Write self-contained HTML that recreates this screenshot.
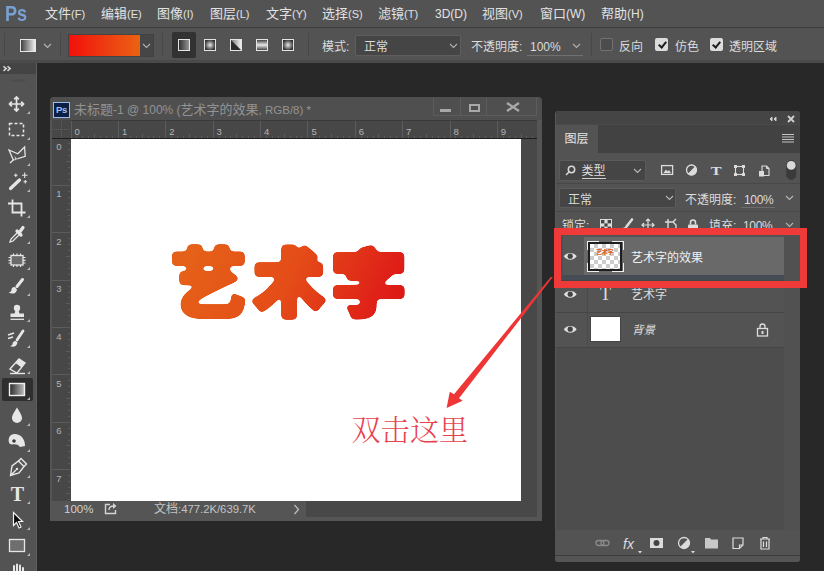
<!DOCTYPE html>
<html lang="zh-CN">
<head>
<meta charset="utf-8">
<title>Photoshop</title>
<style>
*{box-sizing:border-box;margin:0;padding:0}
html,body{width:824px;height:571px;overflow:hidden;background:#282828}
body{position:relative;font-family:"Liberation Sans","Noto Sans CJK SC",sans-serif;color:#dcdcdc;font-size:12px}
.abs{position:absolute}
.l{font-size:11px}
/* menu bar */
#menubar{left:0;top:0;width:824px;height:27px;background:#535353}
#menubar .mi{position:absolute;top:0;height:27px;line-height:27.5px;font-size:13px;color:#e2e2e2;white-space:nowrap}
#menubar .mi .l{font-size:11px;letter-spacing:0}
#pslogo{left:5px;top:0px;font-size:22px;font-weight:bold;color:#78a0d2;line-height:27px;transform:scaleX(0.82);transform-origin:0 50%}
/* options bar */
#optbar{left:0;top:27px;width:824px;height:33px;background:#535353;border-top:1px solid #3c3c3c}
.vsep{position:absolute;width:1px;background:#484848;top:33px;height:23px}
.txt{position:absolute;white-space:nowrap;color:#dcdcdc;font-size:12px;line-height:14px}
.chev{position:absolute}
.cb{width:13px;height:12.5px;background:#dcdcdc;border-radius:2px}
.cb:after{content:"";position:absolute;left:4.5px;top:1.5px;width:3px;height:6px;border:solid #1e1e1e;border-width:0 2px 2px 0;transform:rotate(40deg)}
/* toolbar */
#tools{left:0;top:63px;width:37px;height:508px;background:#535353}
#toolshead{left:0;top:63px;width:37px;height:11px;background:#444}
/* doc window */
#doc{left:50px;top:97px;width:492px;height:424px;background:#4a4a4a;border-radius:4px 4px 0 0}
#doctitle{left:50px;top:97px;width:492px;height:24px;background:#4f4f4f;border-radius:4px 4px 0 0}
#canvas{left:71px;top:139px;width:450px;height:362px;background:#fff}
/* layers panel */
#panel{left:555px;top:111px;width:245px;height:451px;background:#4d4d4d;border-radius:3px}
</style>
</head>
<body>
<!-- MENU BAR -->
<div id="menubar" class="abs">
  <div id="pslogo" class="abs">Ps</div>
  <div class="mi" style="left:45px">文件<span class="l">(F)</span></div>
  <div class="mi" style="left:101px">编辑<span class="l">(E)</span></div>
  <div class="mi" style="left:157px">图像<span class="l">(I)</span></div>
  <div class="mi" style="left:210px">图层<span class="l">(L)</span></div>
  <div class="mi" style="left:266px">文字<span class="l">(Y)</span></div>
  <div class="mi" style="left:322px">选择<span class="l">(S)</span></div>
  <div class="mi" style="left:378px">滤镜<span class="l">(T)</span></div>
  <div class="mi" style="left:435px"><span class="l" style="font-size:12px">3D(D)</span></div>
  <div class="mi" style="left:482px">视图<span class="l">(V)</span></div>
  <div class="mi" style="left:540px">窗口<span class="l" style="font-size:12px">(W)</span></div>
  <div class="mi" style="left:601px">帮助<span class="l" style="font-size:12px">(H)</span></div>
</div>
<!-- OPTIONS BAR -->
<div id="optbar" class="abs"></div>
<div class="vsep" style="left:4px"></div>
<!-- tool preset -->
<svg class="abs" style="left:19px;top:38px" width="18" height="15" viewBox="0 0 18 15">
  <defs><linearGradient id="gbw" x1="0" x2="1" y1="0" y2="0"><stop offset="0" stop-color="#3a3a3a"/><stop offset="1" stop-color="#f4f4f4"/></linearGradient>
  <linearGradient id="gwb" x1="0" x2="1" y1="0" y2="0"><stop offset="0" stop-color="#f4f4f4"/><stop offset="1" stop-color="#3a3a3a"/></linearGradient></defs>
  <rect x="1.5" y="1.5" width="15" height="12" fill="url(#gbw)" stroke="#e6e6e6" stroke-width="1"/>
</svg>
<svg class="abs" style="left:43px;top:43px" width="9" height="6" viewBox="0 0 9 6"><path d="M1 1 L4.5 4.5 L8 1" fill="none" stroke="#b4b4b4" stroke-width="1.2"/></svg>
<div class="vsep" style="left:60px"></div>
<!-- gradient swatch -->
<div class="abs" style="left:67.5px;top:34px;width:72px;height:22.5px;background:linear-gradient(90deg,#f2100c 0%,#ee3a10 50%,#ec6212 100%);border:1px solid #474340;border-right:none"></div>
<div class="abs" style="left:139.5px;top:34px;width:14.5px;height:22.5px;background:#464646;border:1px solid #424242;border-left:none"></div>
<svg class="abs" style="left:142px;top:43px" width="9" height="6" viewBox="0 0 9 6"><path d="M1 1 L4.5 4.5 L8 1" fill="none" stroke="#b0b0b0" stroke-width="1.1"/></svg>
<div class="vsep" style="left:162px"></div>
<!-- gradient type buttons -->
<div class="abs" style="left:172px;top:32px;width:24px;height:26px;background:#323232;border-radius:2px"></div>
<svg class="abs" style="left:171px;top:32px" width="130" height="26" viewBox="0 0 130 26">
  <defs>
   <linearGradient id="g1" x1="0" x2="1" y1="0" y2="0"><stop offset="0" stop-color="#2c2c2c"/><stop offset="1" stop-color="#9a9a9a"/></linearGradient>
   <radialGradient id="g2"><stop offset="0" stop-color="#e8e8e8"/><stop offset="1" stop-color="#333"/></radialGradient>
   <linearGradient id="g3" x1="0" x2="1" y1="0" y2="0"><stop offset="0" stop-color="#777"/><stop offset="1" stop-color="#f0f0f0"/></linearGradient>
   <linearGradient id="g4" x1="0" x2="0" y1="0" y2="1"><stop offset="0" stop-color="#333"/><stop offset="0.5" stop-color="#e8e8e8"/><stop offset="1" stop-color="#333"/></linearGradient>
  </defs>
  <rect x="7.5" y="7.5" width="11" height="11" fill="url(#g1)" stroke="#e4e4e4"/>
  <rect x="33.5" y="7.5" width="11" height="11" fill="url(#g2)" stroke="#e4e4e4"/>
  <rect x="59.5" y="7.5" width="11" height="11" fill="#2c2c2c" stroke="#e4e4e4"/>
  <path d="M60 8 L70 8 L70 18 Z" fill="url(#g3)"/>
  <rect x="85.5" y="7.5" width="11" height="11" fill="url(#g4)" stroke="#e4e4e4"/>
  <rect x="111.5" y="7.5" width="11" height="11" fill="url(#g2)" stroke="#e4e4e4"/>
</svg>
<div class="vsep" style="left:308px"></div>
<div class="txt" style="left:322px;top:40px">模式:</div>
<div class="abs" style="left:355px;top:35px;width:106px;height:21px;background:#454545;border:1px solid #5e5e5e;border-radius:2px"></div>
<div class="txt" style="left:364px;top:40px">正常</div>
<svg class="abs" style="left:449px;top:43px" width="9" height="6" viewBox="0 0 9 6"><path d="M1 1 L4.5 4.5 L8 1" fill="none" stroke="#b0b0b0" stroke-width="1.1"/></svg>
<div class="txt" style="left:471px;top:40px">不透明度:</div>
<div class="txt" style="left:530px;top:40px">100%</div>
<div class="abs" style="left:527px;top:55px;width:56px;height:1px;background:#707070"></div>
<svg class="abs" style="left:572px;top:43px" width="9" height="6" viewBox="0 0 9 6"><path d="M1 1 L4.5 4.5 L8 1" fill="none" stroke="#b0b0b0" stroke-width="1.1"/></svg>
<div class="vsep" style="left:591px"></div>
<div class="abs" style="left:600px;top:38px;width:13px;height:12.5px;background:#4c4c4c;border:1px solid #727272;border-radius:2px"></div>
<div class="txt" style="left:619px;top:40px">反向</div>
<div class="abs cb" style="left:655px;top:38px"></div>
<div class="txt" style="left:675px;top:40px">仿色</div>
<div class="abs cb" style="left:709.5px;top:38px"></div>
<div class="txt" style="left:729px;top:40px">透明区域</div>
<!-- TOOLBAR -->
<div id="tools" class="abs"></div>
<div id="toolshead" class="abs"></div>
<div class="abs" style="left:36px;top:63px;width:1px;height:508px;background:#5e5e5e"></div>
<div class="abs" style="left:0;top:60px;width:824px;height:2.5px;background:#4a4a4a"></div>
<div class="abs" style="left:2px;top:378px;width:31px;height:23px;background:#2f2f2f;border-radius:2px"></div>
<svg class="abs" style="left:0;top:0" width="37" height="571" viewBox="0 0 37 571" fill="none" stroke="#e6e6e6" stroke-width="1.4">
  <defs><linearGradient id="tg" x1="0" x2="1" y1="0" y2="0"><stop offset="0" stop-color="#2a2a2a"/><stop offset="1" stop-color="#bdbdbd"/></linearGradient></defs>
  <!-- header chevrons -->
  <path d="M3.5 66.3 l2.7 2.3 l-2.7 2.3 M7.5 66.3 l2.7 2.3 l-2.7 2.3" stroke="#d8d8d8" stroke-width="1.5"/>
  <path d="M11 80.5 h14" stroke="#4c4c4c" stroke-width="2"/>
  <path d="M30 137 l0 3 l-3 0 z" fill="#b8b8b8" stroke="none"/><path d="M30 163 l0 3 l-3 0 z" fill="#b8b8b8" stroke="none"/><path d="M30 189 l0 3 l-3 0 z" fill="#b8b8b8" stroke="none"/><path d="M30 215 l0 3 l-3 0 z" fill="#b8b8b8" stroke="none"/><path d="M30 241 l0 3 l-3 0 z" fill="#b8b8b8" stroke="none"/><path d="M30 267 l0 3 l-3 0 z" fill="#b8b8b8" stroke="none"/><path d="M30 293 l0 3 l-3 0 z" fill="#b8b8b8" stroke="none"/><path d="M30 319 l0 3 l-3 0 z" fill="#b8b8b8" stroke="none"/><path d="M30 345 l0 3 l-3 0 z" fill="#b8b8b8" stroke="none"/><path d="M30 371 l0 3 l-3 0 z" fill="#b8b8b8" stroke="none"/><path d="M30 397 l0 3 l-3 0 z" fill="#b8b8b8" stroke="none"/><path d="M30 423 l0 3 l-3 0 z" fill="#b8b8b8" stroke="none"/><path d="M30 449 l0 3 l-3 0 z" fill="#b8b8b8" stroke="none"/><path d="M30 475 l0 3 l-3 0 z" fill="#b8b8b8" stroke="none"/><path d="M30 501 l0 3 l-3 0 z" fill="#b8b8b8" stroke="none"/><path d="M30 527 l0 3 l-3 0 z" fill="#b8b8b8" stroke="none"/><path d="M30 553 l0 3 l-3 0 z" fill="#b8b8b8" stroke="none"/>
  <path d="M30 111 l0 3 l-3 0 z" fill="#b8b8b8" stroke="none"/>
  <!-- move -->
  <g transform="translate(16.5,104)" stroke-width="1.7"><path d="M0 -6.5 V6.5 M-6.5 0 H6.5"/><path d="M-2.3 -4.7 L0 -7 L2.3 -4.7 M-2.3 4.7 L0 7 L2.3 4.7 M-4.7 -2.3 L-7 0 L-4.7 2.3 M4.7 -2.3 L7 0 L4.7 2.3" /></g>
  <!-- marquee -->
  <rect x="9.5" y="123.5" width="14" height="12" stroke-dasharray="3 2" stroke-width="1.5"/>
  <!-- polygonal lasso -->
  <path d="M9 150 L17.8 153.8 L24.6 147 L25.2 156.3 L13.3 160 Z" stroke-width="1.3"/>
  <path d="M13.3 160 L10 163" stroke-width="1.3"/>
  <path d="M14.5 155.5 L15 161 L16.5 159.5 L18.5 160.5 Z" fill="#e6e6e6" stroke="#535353" stroke-width="0.6"/>
  <!-- magic wand -->
  <path d="M10.5 188.5 L19.5 180" stroke-width="3.2" stroke-linecap="round"/>
  <path d="M24.7 172.5 v5.5 M22 175.2 h5.5 M15.8 173.5 v3.5 M14 175.2 h3.5 M25.3 180 v3.5 M23.5 181.7 h3.5" stroke-width="1.1"/>
  <!-- crop -->
  <path d="M12.5 199.5 V212.5 H25.5 M8 203.5 H21.5 V216.5" stroke-width="1.8"/>
  <!-- eyedropper -->
  <path d="M10 242 L11 239 L18 232 L20 234 L13 241 Z" stroke-width="1.3"/>
  <path d="M17 231 L21 235 M19 233 L23 227.5" stroke-width="3.2" stroke-linecap="round"/>
  <!-- patch -->
  <rect x="11" y="255.5" width="12" height="9.5" fill="#6a6a6a" stroke-width="1.3"/>
  <path d="M13.5 253.5 v2 M17 253.5 v2 M20.5 253.5 v2 M13.5 265 v2 M17 265 v2 M20.5 265 v2 M8.5 257.5 h2.5 M8.5 260.3 h2.5 M8.5 263 h2.5 M23 257.5 h2.5 M23 260.3 h2.5 M23 263 h2.5" stroke-width="1.2"/>
  <!-- brush -->
  <path d="M22.5 279.5 L17 286.5" stroke-width="3" stroke-linecap="round"/>
  <path d="M15 287 c-2 -0.5 -3.5 1 -3.5 2.8 c0 1.5 -1.5 2.7 -3 2.7 c3 2 8 1.5 8.5 -3 z" fill="#e6e6e6" stroke="none"/>
  <!-- stamp -->
  <circle cx="17" cy="308" r="3.2" fill="#e6e6e6" stroke="none"/>
  <path d="M15.5 310 h3 l1 4 h-5 z" fill="#e6e6e6" stroke="none"/>
  <rect x="10.5" y="313.5" width="13.5" height="3.5" fill="#e6e6e6" stroke="none"/>
  <path d="M10.5 319.3 h13.5" stroke-width="1.3"/>
  <!-- history brush -->
  <path d="M23 331 L17 340" stroke-width="2.8" stroke-linecap="round"/>
  <path d="M15.5 341 c-2 0 -3 1.5 -3 3 c0 1 -1.5 2 -2.5 2 c3 1.5 7 0.5 7.5 -3.5 z" fill="#e6e6e6" stroke="none"/>
  <path d="M8 335 l6 -2 M8 338.5 l5 -1.5" stroke-width="1.6"/>
  <!-- eraser -->
  <path d="M10 369 L19 359 L25 363 L17 373 Z" stroke-width="1.4"/>
  <path d="M19 359 L25 363 L21.5 367.5 L15.5 363 Z" fill="#e6e6e6" stroke="none"/>
  <path d="M10 373.5 h15" stroke-width="1.4"/>
  <!-- gradient -->
  <rect x="9.5" y="383.5" width="15" height="12" fill="url(#tg)" stroke="#f0f0f0" stroke-width="1.4"/>
  <!-- blur drop -->
  <path d="M17 407.5 c2.5 4.5 5 7.5 5 10.5 a5 5 0 0 1 -10 0 c0 -3 2.5 -6 5 -10.5 z" fill="#e6e6e6" stroke="none"/>
  <!-- sponge/dodge -->
  <path d="M9 438 c1 -4 6 -5 10 -3 c4 2 6 6 6 11 l-5 1 c-2 -3 -5 -3 -8 -2.5 c-3 0 -4 -3.5 -3 -6.5 z" fill="#e6e6e6" stroke="none"/>
  <circle cx="14" cy="441" r="1.8" fill="#3a3a3a" stroke="none"/>
  <!-- pen -->
  <path d="M10.5 475.5 L12 466 L18.5 461 L24 466.5 L19 473 Z M10.5 475.5 L16 470" stroke-width="1.4"/>
  <path d="M18.5 461 L21 458.5 L26.5 464 L24 466.5" stroke-width="1.4"/>
  <circle cx="17" cy="469" r="1.2" fill="#e6e6e6" stroke="none"/>
  <!-- arrow (path selection) -->
  <path d="M13.5 512.5 V525.5 L16.5 522.5 L19 528 L21 527 L18.5 521.5 L22.5 521.5 Z" fill="#0a0a0a" stroke="#f0f0f0" stroke-width="1.2"/>
  <!-- rectangle -->
  <rect x="9.5" y="539.5" width="15" height="12" fill="#6e6e6e" stroke="#e6e6e6" stroke-width="1.3"/>
  <!-- hand -->
  <path d="M14 571 V566 M17 571 V564.5 M20 571 V565.5 M23 571 V568" stroke-width="2" stroke-linecap="round"/>
  <!-- T -->
  <text x="17.5" y="501" text-anchor="middle" font-family="Liberation Serif, serif" font-weight="bold" font-size="20" fill="#e6e6e6" stroke="none">T</text>
</svg>
<!-- DOCUMENT WINDOW -->
<div id="doc" class="abs"></div>
<div id="doctitle" class="abs"></div>
<!-- title -->
<div class="abs" style="left:53px;top:102px;width:17px;height:16px;background:#0c1f47;border:1px solid #9dbde8;color:#a4c4f0;font-size:9.5px;font-weight:bold;line-height:14px;text-align:center;letter-spacing:-0.3px">Ps</div>
<div class="abs" style="left:74px;top:102px;font-size:13px;line-height:16px;color:#939393;white-space:nowrap">未标题<span style="font-size:12px">-1 @ 100% (</span>艺术字的效果<span style="font-size:11.5px">, RGB/8) *</span></div>
<!-- window buttons -->
<div class="abs" style="left:433px;top:98px;width:104px;height:18px;border:1px solid #5c5c5c;border-top:none;background:#4f4f4f"></div>
<div class="abs" style="left:460px;top:98px;width:1px;height:18px;background:#5c5c5c"></div>
<div class="abs" style="left:486px;top:98px;width:1px;height:18px;background:#5c5c5c"></div>
<div class="abs" style="left:440px;top:109px;width:11px;height:3px;background:#a8a8a8"></div>
<div class="abs" style="left:469px;top:104px;width:11px;height:8px;border:2px solid #a8a8a8"></div>
<svg class="abs" style="left:504px;top:101px" width="18" height="12" viewBox="0 0 18 12"><path d="M3 2 L15 10 M15 2 L3 10" stroke="#a8a8a8" stroke-width="2.4"/></svg>
<!-- rulers -->
<div class="abs" style="left:52px;top:120px;width:485px;height:18px;background:#474747;border-top:1px solid #3a3a3a"></div>
<div class="abs" style="left:52px;top:120px;width:19px;height:381px;background:#474747"></div>
<div class="abs" style="left:521px;top:138px;width:16px;height:363px;background:#484848"></div>
<div class="abs" style="left:537px;top:120px;width:5px;height:401px;background:#555"></div>
<div class="abs" style="left:50px;top:120px;width:2px;height:401px;background:#555"></div>
<svg class="abs" style="left:0;top:0" width="824" height="571" viewBox="0 0 824 571" shape-rendering="crispEdges">
<path d="M52 129.5 H70 M61.5 121 V138" stroke="#5e5e5e" stroke-dasharray="1 1"/>
<path d="M71.0 121 V138" stroke="#5c5c5c" stroke-width="1"/><text x="74.5" y="135" font-size="9.5" fill="#b4b4b4" font-family="Liberation Sans, sans-serif">0</text><path d="M76.9 136 V138" stroke="#5c5c5c" stroke-width="1"/><path d="M82.8 136 V138" stroke="#5c5c5c" stroke-width="1"/><path d="M88.8 136 V138" stroke="#5c5c5c" stroke-width="1"/><path d="M94.7 134 V138" stroke="#5c5c5c" stroke-width="1"/><path d="M100.6 136 V138" stroke="#5c5c5c" stroke-width="1"/><path d="M106.5 136 V138" stroke="#5c5c5c" stroke-width="1"/><path d="M112.4 136 V138" stroke="#5c5c5c" stroke-width="1"/><path d="M118.4 121 V138" stroke="#5c5c5c" stroke-width="1"/><text x="121.9" y="135" font-size="9.5" fill="#b4b4b4" font-family="Liberation Sans, sans-serif">1</text><path d="M124.3 136 V138" stroke="#5c5c5c" stroke-width="1"/><path d="M130.2 136 V138" stroke="#5c5c5c" stroke-width="1"/><path d="M136.1 136 V138" stroke="#5c5c5c" stroke-width="1"/><path d="M142.1 134 V138" stroke="#5c5c5c" stroke-width="1"/><path d="M148.0 136 V138" stroke="#5c5c5c" stroke-width="1"/><path d="M153.9 136 V138" stroke="#5c5c5c" stroke-width="1"/><path d="M159.8 136 V138" stroke="#5c5c5c" stroke-width="1"/><path d="M165.7 121 V138" stroke="#5c5c5c" stroke-width="1"/><text x="169.2" y="135" font-size="9.5" fill="#b4b4b4" font-family="Liberation Sans, sans-serif">2</text><path d="M171.7 136 V138" stroke="#5c5c5c" stroke-width="1"/><path d="M177.6 136 V138" stroke="#5c5c5c" stroke-width="1"/><path d="M183.5 136 V138" stroke="#5c5c5c" stroke-width="1"/><path d="M189.4 134 V138" stroke="#5c5c5c" stroke-width="1"/><path d="M195.3 136 V138" stroke="#5c5c5c" stroke-width="1"/><path d="M201.3 136 V138" stroke="#5c5c5c" stroke-width="1"/><path d="M207.2 136 V138" stroke="#5c5c5c" stroke-width="1"/><path d="M213.1 121 V138" stroke="#5c5c5c" stroke-width="1"/><text x="216.6" y="135" font-size="9.5" fill="#b4b4b4" font-family="Liberation Sans, sans-serif">3</text><path d="M219.0 136 V138" stroke="#5c5c5c" stroke-width="1"/><path d="M225.0 136 V138" stroke="#5c5c5c" stroke-width="1"/><path d="M230.9 136 V138" stroke="#5c5c5c" stroke-width="1"/><path d="M236.8 134 V138" stroke="#5c5c5c" stroke-width="1"/><path d="M242.7 136 V138" stroke="#5c5c5c" stroke-width="1"/><path d="M248.6 136 V138" stroke="#5c5c5c" stroke-width="1"/><path d="M254.6 136 V138" stroke="#5c5c5c" stroke-width="1"/><path d="M260.5 121 V138" stroke="#5c5c5c" stroke-width="1"/><text x="264.0" y="135" font-size="9.5" fill="#b4b4b4" font-family="Liberation Sans, sans-serif">4</text><path d="M266.4 136 V138" stroke="#5c5c5c" stroke-width="1"/><path d="M272.3 136 V138" stroke="#5c5c5c" stroke-width="1"/><path d="M278.2 136 V138" stroke="#5c5c5c" stroke-width="1"/><path d="M284.2 134 V138" stroke="#5c5c5c" stroke-width="1"/><path d="M290.1 136 V138" stroke="#5c5c5c" stroke-width="1"/><path d="M296.0 136 V138" stroke="#5c5c5c" stroke-width="1"/><path d="M301.9 136 V138" stroke="#5c5c5c" stroke-width="1"/><path d="M307.9 121 V138" stroke="#5c5c5c" stroke-width="1"/><text x="311.4" y="135" font-size="9.5" fill="#b4b4b4" font-family="Liberation Sans, sans-serif">5</text><path d="M313.8 136 V138" stroke="#5c5c5c" stroke-width="1"/><path d="M319.7 136 V138" stroke="#5c5c5c" stroke-width="1"/><path d="M325.6 136 V138" stroke="#5c5c5c" stroke-width="1"/><path d="M331.5 134 V138" stroke="#5c5c5c" stroke-width="1"/><path d="M337.5 136 V138" stroke="#5c5c5c" stroke-width="1"/><path d="M343.4 136 V138" stroke="#5c5c5c" stroke-width="1"/><path d="M349.3 136 V138" stroke="#5c5c5c" stroke-width="1"/><path d="M355.2 121 V138" stroke="#5c5c5c" stroke-width="1"/><text x="358.7" y="135" font-size="9.5" fill="#b4b4b4" font-family="Liberation Sans, sans-serif">6</text><path d="M361.1 136 V138" stroke="#5c5c5c" stroke-width="1"/><path d="M367.1 136 V138" stroke="#5c5c5c" stroke-width="1"/><path d="M373.0 136 V138" stroke="#5c5c5c" stroke-width="1"/><path d="M378.9 134 V138" stroke="#5c5c5c" stroke-width="1"/><path d="M384.8 136 V138" stroke="#5c5c5c" stroke-width="1"/><path d="M390.7 136 V138" stroke="#5c5c5c" stroke-width="1"/><path d="M396.7 136 V138" stroke="#5c5c5c" stroke-width="1"/><path d="M402.6 121 V138" stroke="#5c5c5c" stroke-width="1"/><text x="406.1" y="135" font-size="9.5" fill="#b4b4b4" font-family="Liberation Sans, sans-serif">7</text><path d="M408.5 136 V138" stroke="#5c5c5c" stroke-width="1"/><path d="M414.4 136 V138" stroke="#5c5c5c" stroke-width="1"/><path d="M420.4 136 V138" stroke="#5c5c5c" stroke-width="1"/><path d="M426.3 134 V138" stroke="#5c5c5c" stroke-width="1"/><path d="M432.2 136 V138" stroke="#5c5c5c" stroke-width="1"/><path d="M438.1 136 V138" stroke="#5c5c5c" stroke-width="1"/><path d="M444.0 136 V138" stroke="#5c5c5c" stroke-width="1"/><path d="M450.0 121 V138" stroke="#5c5c5c" stroke-width="1"/><text x="453.5" y="135" font-size="9.5" fill="#b4b4b4" font-family="Liberation Sans, sans-serif">8</text><path d="M455.9 136 V138" stroke="#5c5c5c" stroke-width="1"/><path d="M461.8 136 V138" stroke="#5c5c5c" stroke-width="1"/><path d="M467.7 136 V138" stroke="#5c5c5c" stroke-width="1"/><path d="M473.6 134 V138" stroke="#5c5c5c" stroke-width="1"/><path d="M479.6 136 V138" stroke="#5c5c5c" stroke-width="1"/><path d="M485.5 136 V138" stroke="#5c5c5c" stroke-width="1"/><path d="M491.4 136 V138" stroke="#5c5c5c" stroke-width="1"/><path d="M497.3 121 V138" stroke="#5c5c5c" stroke-width="1"/><text x="500.8" y="135" font-size="9.5" fill="#b4b4b4" font-family="Liberation Sans, sans-serif">9</text><path d="M503.3 136 V138" stroke="#5c5c5c" stroke-width="1"/><path d="M509.2 136 V138" stroke="#5c5c5c" stroke-width="1"/><path d="M515.1 136 V138" stroke="#5c5c5c" stroke-width="1"/><path d="M521.0 134 V138" stroke="#5c5c5c" stroke-width="1"/><path d="M526.9 136 V138" stroke="#5c5c5c" stroke-width="1"/><path d="M532.9 136 V138" stroke="#5c5c5c" stroke-width="1"/>
<path d="M52 138.0 H70" stroke="#5c5c5c" stroke-width="1"/><text x="59" y="150.0" text-anchor="middle" font-size="9.5" fill="#b4b4b4" font-family="Liberation Sans, sans-serif">0</text><path d="M68 143.9 H70" stroke="#5c5c5c" stroke-width="1"/><path d="M68 149.8 H70" stroke="#5c5c5c" stroke-width="1"/><path d="M68 155.8 H70" stroke="#5c5c5c" stroke-width="1"/><path d="M66 161.7 H70" stroke="#5c5c5c" stroke-width="1"/><path d="M68 167.6 H70" stroke="#5c5c5c" stroke-width="1"/><path d="M68 173.5 H70" stroke="#5c5c5c" stroke-width="1"/><path d="M68 179.4 H70" stroke="#5c5c5c" stroke-width="1"/><path d="M52 185.4 H70" stroke="#5c5c5c" stroke-width="1"/><text x="59" y="197.4" text-anchor="middle" font-size="9.5" fill="#b4b4b4" font-family="Liberation Sans, sans-serif">1</text><path d="M68 191.3 H70" stroke="#5c5c5c" stroke-width="1"/><path d="M68 197.2 H70" stroke="#5c5c5c" stroke-width="1"/><path d="M68 203.1 H70" stroke="#5c5c5c" stroke-width="1"/><path d="M66 209.1 H70" stroke="#5c5c5c" stroke-width="1"/><path d="M68 215.0 H70" stroke="#5c5c5c" stroke-width="1"/><path d="M68 220.9 H70" stroke="#5c5c5c" stroke-width="1"/><path d="M68 226.8 H70" stroke="#5c5c5c" stroke-width="1"/><path d="M52 232.7 H70" stroke="#5c5c5c" stroke-width="1"/><text x="59" y="244.7" text-anchor="middle" font-size="9.5" fill="#b4b4b4" font-family="Liberation Sans, sans-serif">2</text><path d="M68 238.7 H70" stroke="#5c5c5c" stroke-width="1"/><path d="M68 244.6 H70" stroke="#5c5c5c" stroke-width="1"/><path d="M68 250.5 H70" stroke="#5c5c5c" stroke-width="1"/><path d="M66 256.4 H70" stroke="#5c5c5c" stroke-width="1"/><path d="M68 262.3 H70" stroke="#5c5c5c" stroke-width="1"/><path d="M68 268.3 H70" stroke="#5c5c5c" stroke-width="1"/><path d="M68 274.2 H70" stroke="#5c5c5c" stroke-width="1"/><path d="M52 280.1 H70" stroke="#5c5c5c" stroke-width="1"/><text x="59" y="292.1" text-anchor="middle" font-size="9.5" fill="#b4b4b4" font-family="Liberation Sans, sans-serif">3</text><path d="M68 286.0 H70" stroke="#5c5c5c" stroke-width="1"/><path d="M68 292.0 H70" stroke="#5c5c5c" stroke-width="1"/><path d="M68 297.9 H70" stroke="#5c5c5c" stroke-width="1"/><path d="M66 303.8 H70" stroke="#5c5c5c" stroke-width="1"/><path d="M68 309.7 H70" stroke="#5c5c5c" stroke-width="1"/><path d="M68 315.6 H70" stroke="#5c5c5c" stroke-width="1"/><path d="M68 321.6 H70" stroke="#5c5c5c" stroke-width="1"/><path d="M52 327.5 H70" stroke="#5c5c5c" stroke-width="1"/><text x="59" y="339.5" text-anchor="middle" font-size="9.5" fill="#b4b4b4" font-family="Liberation Sans, sans-serif">4</text><path d="M68 333.4 H70" stroke="#5c5c5c" stroke-width="1"/><path d="M68 339.3 H70" stroke="#5c5c5c" stroke-width="1"/><path d="M68 345.2 H70" stroke="#5c5c5c" stroke-width="1"/><path d="M66 351.2 H70" stroke="#5c5c5c" stroke-width="1"/><path d="M68 357.1 H70" stroke="#5c5c5c" stroke-width="1"/><path d="M68 363.0 H70" stroke="#5c5c5c" stroke-width="1"/><path d="M68 368.9 H70" stroke="#5c5c5c" stroke-width="1"/><path d="M52 374.9 H70" stroke="#5c5c5c" stroke-width="1"/><text x="59" y="386.9" text-anchor="middle" font-size="9.5" fill="#b4b4b4" font-family="Liberation Sans, sans-serif">5</text><path d="M68 380.8 H70" stroke="#5c5c5c" stroke-width="1"/><path d="M68 386.7 H70" stroke="#5c5c5c" stroke-width="1"/><path d="M68 392.6 H70" stroke="#5c5c5c" stroke-width="1"/><path d="M66 398.5 H70" stroke="#5c5c5c" stroke-width="1"/><path d="M68 404.5 H70" stroke="#5c5c5c" stroke-width="1"/><path d="M68 410.4 H70" stroke="#5c5c5c" stroke-width="1"/><path d="M68 416.3 H70" stroke="#5c5c5c" stroke-width="1"/><path d="M52 422.2 H70" stroke="#5c5c5c" stroke-width="1"/><text x="59" y="434.2" text-anchor="middle" font-size="9.5" fill="#b4b4b4" font-family="Liberation Sans, sans-serif">6</text><path d="M68 428.1 H70" stroke="#5c5c5c" stroke-width="1"/><path d="M68 434.1 H70" stroke="#5c5c5c" stroke-width="1"/><path d="M68 440.0 H70" stroke="#5c5c5c" stroke-width="1"/><path d="M66 445.9 H70" stroke="#5c5c5c" stroke-width="1"/><path d="M68 451.8 H70" stroke="#5c5c5c" stroke-width="1"/><path d="M68 457.7 H70" stroke="#5c5c5c" stroke-width="1"/><path d="M68 463.7 H70" stroke="#5c5c5c" stroke-width="1"/><path d="M52 469.6 H70" stroke="#5c5c5c" stroke-width="1"/><text x="59" y="481.6" text-anchor="middle" font-size="9.5" fill="#b4b4b4" font-family="Liberation Sans, sans-serif">7</text><path d="M68 475.5 H70" stroke="#5c5c5c" stroke-width="1"/><path d="M68 481.4 H70" stroke="#5c5c5c" stroke-width="1"/><path d="M68 487.4 H70" stroke="#5c5c5c" stroke-width="1"/><path d="M66 493.3 H70" stroke="#5c5c5c" stroke-width="1"/><path d="M68 499.2 H70" stroke="#5c5c5c" stroke-width="1"/>
</svg>
<div class="abs" style="left:52px;top:138px;width:485px;height:1px;background:#1e1e1e"></div>
<div id="canvas" class="abs"></div>
<!-- canvas art -->
<svg class="abs" style="left:71px;top:138px" width="450" height="363" viewBox="71 138 450 363">
  <defs><linearGradient id="artg" gradientUnits="userSpaceOnUse" x1="200" y1="240" x2="400" y2="330">
    <stop offset="0" stop-color="#e56018"/><stop offset="0.45" stop-color="#e44c18"/><stop offset="0.85" stop-color="#df2018"/><stop offset="1" stop-color="#dc1414"/></linearGradient>
  <filter id="goo" x="-5%" y="-10%" width="110%" height="120%"><feGaussianBlur stdDeviation="2.2"/><feComponentTransfer><feFuncA type="linear" slope="9" intercept="-4"/></feComponentTransfer></filter></defs>
  <mask id="artm" maskUnits="userSpaceOnUse" x="71" y="138" width="450" height="363"><g font-family="'Noto Sans CJK SC', sans-serif" font-weight="900" font-size="72" fill="#fff" stroke="#fff" stroke-width="4" stroke-linejoin="round" filter="url(#goo)">
  <text transform="matrix(1.050 0 0 1.052 170.4 311.6)" x="0" y="0">艺</text>
  <text transform="matrix(1.018 0 0 1.031 252.2 310.3)" x="0" y="0">术</text>
  <text transform="matrix(1.062 0 0 1.004 330.6 309.6)" x="0" y="0">字</text>
  </g></mask>
  <rect x="160" y="235" width="260" height="95" fill="url(#artg)" mask="url(#artm)"/>
  <text x="351.5" y="441.3" font-family="'Noto Serif CJK SC', serif" font-weight="300" font-size="29" letter-spacing="0.2" fill="#e8434d">双击这里</text>
</svg>
<!-- arrow -->
<svg class="abs" style="left:430px;top:270px" width="130" height="145" viewBox="430 270 130 145">
  <path d="M550.8 277 L552.8 277 L459 398.3 L462.6 400.7 L446.6 408 L449.8 391.8 L454 394.2 Z" fill="#ee3636"/>
</svg>
<!-- status bar -->
<div class="abs" style="left:52px;top:501px;width:254px;height:16px;background:#555"></div>
<div class="abs" style="left:306px;top:501px;width:231px;height:16px;background:#484848"></div>
<div class="abs" style="left:50px;top:517px;width:492px;height:4px;background:#555"></div>
<div class="txt" style="left:64px;top:502px;font-size:11.5px;color:#d0d0d0">100%</div>
<svg class="abs" style="left:104px;top:502px" width="15" height="13" viewBox="0 0 15 13" fill="none" stroke="#d4d4d4" stroke-width="1.4"><path d="M6 2.5 H1.5 V11.5 H11.5 V8"/><path d="M5 8 C5 5 7 4 10 4" /><path d="M9 1 L12.5 4 L9 7 Z" fill="#d4d4d4" stroke="none"/></svg>
<div class="txt" style="left:154px;top:502px;font-size:12px;color:#c4c4c4">文档<span style="font-size:11.3px">:477.2K/639.7K</span></div>
<svg class="abs" style="left:293px;top:504px" width="7" height="11" viewBox="0 0 7 11"><path d="M1.5 1 L5.5 5.5 L1.5 10" fill="none" stroke="#c0c0c0" stroke-width="1.2"/></svg>
<!-- LAYERS PANEL -->
<div id="panel" class="abs"></div>
<!-- header strip -->
<div class="abs" style="left:555px;top:111px;width:245px;height:13px;background:#454545;border-radius:3px 3px 0 0"></div>
<div class="abs" style="left:555px;top:124px;width:245px;height:1px;background:#4a4a4a"></div>
<svg class="abs" style="left:768px;top:115px" width="30" height="8" viewBox="0 0 30 8" fill="none" stroke="#d0d0d0"><path d="M4 2 L2 4 L4 6 Z M8 2 L6 4 L8 6 Z" stroke-width="1" fill="#d0d0d0"/><path d="M20 1 L26 7 M26 1 L20 7" stroke-width="1.8"/></svg>
<!-- tab row -->
<div class="abs" style="left:555px;top:125px;width:245px;height:28px;background:#424242"></div>
<div class="abs" style="left:555px;top:125px;width:43px;height:28px;background:#535353"></div>
<div class="txt" style="left:564.5px;top:132px;font-size:12px;color:#e8e8e8">图层</div>
<svg class="abs" style="left:782px;top:133px" width="12" height="10" viewBox="0 0 12 10"><path d="M0 1.5 H12 M0 4 H12 M0 6.5 H12 M0 9 H12" stroke="#c4c4c4" stroke-width="1"/></svg>
<!-- filter row -->
<div class="abs" style="left:555px;top:153px;width:245px;height:30px;background:#535353"></div>
<div class="abs" style="left:559px;top:160px;width:87px;height:21px;background:#454545;border:1px solid #5a5a5a;border-radius:2px"></div>
<svg class="abs" style="left:564px;top:164px" width="13" height="13" viewBox="0 0 13 13" fill="none" stroke="#d8d8d8" stroke-width="1.5"><circle cx="7.5" cy="5.5" r="3.2"/><path d="M5.2 7.8 L2 11"/></svg>
<div class="txt" style="left:581.5px;top:165px;border-bottom:1px solid #d0d0d0;line-height:13px">类型</div>
<svg class="abs" style="left:633px;top:168px" width="9" height="6" viewBox="0 0 9 6"><path d="M1 1 L4.5 4.5 L8 1" fill="none" stroke="#b8b8b8" stroke-width="1.1"/></svg>
<svg class="abs" style="left:655px;top:158px" width="145" height="24" viewBox="0 0 145 24" fill="none" stroke="#dcdcdc" stroke-width="1.3">
  <rect x="6.6" y="7.6" width="11" height="8.8"/><path d="M8.5 15 l2.5 -3.5 l1.5 2 l1.5 -1.5 l2 3 z" fill="#dcdcdc" stroke="none"/>
  <circle cx="36.5" cy="12" r="5"/><path d="M32.8 15.7 A5.2 5.2 0 0 0 40.2 8.3 Z" fill="#dcdcdc" stroke="none"/>
  <text transform="translate(61.2 16.8) scale(1.25 1)" x="0" y="0" text-anchor="middle" font-family="Liberation Serif, serif" font-weight="bold" font-size="13" fill="#dcdcdc" stroke="none">T</text>
  <rect x="80.5" y="8.5" width="8" height="8" stroke-width="1.1"/><rect x="79" y="7" width="3" height="3" fill="#dcdcdc" stroke="none"/><rect x="87" y="7" width="3" height="3" fill="#dcdcdc" stroke="none"/><rect x="79" y="15" width="3" height="3" fill="#dcdcdc" stroke="none"/><rect x="87" y="15" width="3" height="3" fill="#dcdcdc" stroke="none"/>
  <path d="M107 8 h4.5 l2.5 2.5 v7 h-7 z" stroke-width="1.1"/><path d="M111.5 8 v2.5 h2.5" stroke-width="1"/><rect x="104" y="13" width="5" height="5.5" fill="#dcdcdc" stroke="none"/>
  <rect x="131.5" y="2.5" width="9.5" height="19" rx="4.7" fill="#3a3a3a" stroke="#404040" stroke-width="1"/><circle cx="136.2" cy="7.4" r="4.4" fill="#d8d8d8" stroke="none"/>
</svg>
<!-- blend row -->
<div class="abs" style="left:555px;top:183px;width:245px;height:28px;background:#535353;border-top:1px solid #484848"></div>
<div class="abs" style="left:559px;top:188px;width:117px;height:20px;background:#454545;border:1px solid #5a5a5a;border-radius:2px"></div>
<div class="txt" style="left:568px;top:192.5px">正常</div>
<svg class="abs" style="left:665px;top:195px" width="9" height="6" viewBox="0 0 9 6"><path d="M1 1 L4.5 4.5 L8 1" fill="none" stroke="#b8b8b8" stroke-width="1.1"/></svg>
<div class="txt" style="left:685px;top:192.5px">不透明度:</div>
<div class="txt" style="left:744px;top:192.5px;letter-spacing:-0.3px">100%</div>
<div class="abs" style="left:741px;top:206.5px;width:34px;height:1px;background:#6c6c6c"></div>
<svg class="abs" style="left:785px;top:195px" width="9" height="6" viewBox="0 0 9 6"><path d="M1 1 L4.5 4.5 L8 1" fill="none" stroke="#b8b8b8" stroke-width="1.1"/></svg>
<!-- lock row -->
<div class="abs" style="left:555px;top:211px;width:245px;height:25px;background:#535353;border-top:1px solid #484848"></div>
<div class="txt" style="left:562px;top:219px">锁定:</div>
<svg class="abs" style="left:595px;top:214px" width="110" height="22" viewBox="0 0 110 22" fill="none" stroke="#dcdcdc" stroke-width="1.3">
  <rect x="5.5" y="5.5" width="11" height="11" fill="#dcdcdc" stroke-width="1"/><rect x="6" y="6" width="3.4" height="3.4" fill="#444" stroke="none"/><rect x="12.6" y="6" width="3.4" height="3.4" fill="#444" stroke="none"/><rect x="9.4" y="9.4" width="3.2" height="3.2" fill="#444" stroke="none"/><rect x="6" y="12.6" width="3.4" height="3.4" fill="#444" stroke="none"/><rect x="12.6" y="12.6" width="3.4" height="3.4" fill="#444" stroke="none"/>
  <path d="M37 5.5 L31.5 12.5" stroke-width="2.6" stroke-linecap="round"/><path d="M30.5 13 c-2 0 -3 1.5 -4.5 3.5 c3 1 5.5 0 6.5 -2 z" fill="#dcdcdc" stroke="none"/>
  <path d="M53 5 V17 M47 11 H59 M51 7 L53 5 L55 7 M51 15 L53 17 L55 15 M49 9 L47 11 L49 13 M57 9 L59 11 L57 13" stroke-width="1.2"/>
  <path d="M73 5 V15.5 H84 M70 8 H78 l3 3 V19 M78 8 l3 -3" stroke-width="1.4"/>
  <rect x="93" y="10.5" width="10" height="8" rx="1" fill="#dcdcdc" stroke="none"/><path d="M95.5 10.5 V8.5 a2.5 2.5 0 0 1 5 0 V10.5" stroke-width="1.6"/>
</svg>
<div class="txt" style="left:709px;top:219px">填充:</div>
<div class="txt" style="left:743px;top:219px;letter-spacing:-0.3px">100%</div>
<svg class="abs" style="left:785px;top:222px" width="9" height="6" viewBox="0 0 9 6"><path d="M1 1 L4.5 4.5 L8 1" fill="none" stroke="#b8b8b8" stroke-width="1.1"/></svg>
<!-- layer rows -->
<div class="abs" style="left:555px;top:236px;width:229px;height:44px;background:#575757"></div>
<div class="abs" style="left:584px;top:236px;width:200px;height:44px;background:#696969"></div>
<div class="abs" style="left:555px;top:280px;width:229px;height:32px;background:#535353;border-top:1px solid #454545"></div>
<div class="abs" style="left:555px;top:312px;width:229px;height:36px;background:#535353;border-top:1px solid #454545;border-bottom:1px solid #454545"></div>
<div class="abs" style="left:587px;top:280px;width:1px;height:67px;background:#4a4a4a"></div>
<div class="abs" style="left:784px;top:236px;width:16px;height:294px;background:#515151"></div>
<div class="abs" style="left:555px;top:113px;width:1px;height:447px;background:#585858"></div>
<!-- eyes -->
<svg class="abs" style="left:562px;top:248px" width="16" height="90" viewBox="0 0 16 90">
  <g id="eye"><path d="M1.8 8.3 C4.5 3.8 12 3.8 14.7 8.3 C12 12.8 4.5 12.8 1.8 8.3 Z" fill="#e0e0e0"/><circle cx="8.2" cy="8.2" r="2.6" fill="#444"/></g>
  <use href="#eye" y="38"/><use href="#eye" y="73"/>
</svg>
<!-- thumb 1 -->
<div class="abs" style="left:584px;top:236px;width:200px;height:1px;background:#50565c"></div>
<div class="abs" style="left:561px;top:275px;width:223px;height:5px;background:#454c53"></div>
<div class="abs" style="left:561px;top:236px;width:2px;height:44px;background:#4a5057"></div>
<div class="abs" style="left:587px;top:241px;width:36.5px;height:31px;border:1px solid #f0f0f0"></div>
<div class="abs" style="left:599px;top:240px;width:13px;height:33px;background:#696969"></div>
<div class="abs" style="left:586px;top:250px;width:39px;height:13px;background:#696969"></div>
<div class="abs" style="left:588px;top:242px;width:33.5px;height:29px;border:2px solid #1e1e1e;background-color:#fff;background-image:linear-gradient(45deg,#ccc 25%,transparent 25%,transparent 75%,#ccc 75%),linear-gradient(45deg,#ccc 25%,transparent 25%,transparent 75%,#ccc 75%);background-size:8px 8px;background-position:0 0,4px 4px"></div>
<div class="abs" style="left:596px;top:248px;font-size:6px;line-height:8px;font-weight:900;color:#d8641a;white-space:nowrap;letter-spacing:-0.3px">艺术字</div>
<div class="txt" style="left:631px;top:251px;color:#f0f0f0">艺术字的效果</div>
<!-- layer 2 -->
<div class="abs" style="left:600px;top:284px;font-family:'Liberation Serif',serif;font-size:18px;line-height:20px;color:#dcdcdc">T</div>
<div class="txt" style="left:631px;top:287.5px">艺术字</div>
<!-- layer 3 -->
<div class="abs" style="left:589.5px;top:316px;width:31px;height:26px;background:#fff;border:1px solid #444"></div>
<div class="txt" style="left:632px;top:323px;font-style:italic;font-size:11.5px">背景</div>
<svg class="abs" style="left:756px;top:322px" width="13" height="15" viewBox="0 0 13 15" fill="none" stroke="#dcdcdc" stroke-width="1.3"><rect x="1.5" y="6.5" width="10" height="7.5"/><path d="M4 6.5 V4.5 a2.5 2.5 0 0 1 5 0 V6.5"/><rect x="5.5" y="9" width="2" height="3" fill="#dcdcdc" stroke="none"/></svg>
<!-- footer -->
<div class="abs" style="left:555px;top:530px;width:245px;height:25px;background:#535353"></div>
<div class="abs" style="left:555px;top:555px;width:245px;height:1px;background:#3c3c3c"></div>
<div class="abs" style="left:555px;top:556px;width:245px;height:6px;background:#555;border-radius:0 0 3px 3px"></div>
<svg class="abs" style="left:590px;top:532px" width="190" height="24" viewBox="0 0 190 24" fill="none" stroke="#dcdcdc" stroke-width="1.3">
  <g stroke="#8a8a8a"><rect x="6" y="8.5" width="8" height="5" rx="2.5"/><rect x="11" y="8.5" width="8" height="5" rx="2.5"/></g>
  <text x="33" y="16.5" font-family="Liberation Sans, sans-serif" font-style="italic" font-size="14" fill="#dcdcdc" stroke="none">fx</text>
  <path d="M48 19 h4 l-2 2.5 z" fill="#dcdcdc" stroke="none"/>
  <rect x="60" y="6" width="13" height="10" fill="#dcdcdc" stroke="none"/><circle cx="66.5" cy="11" r="3" fill="#444" stroke="none"/>
  <circle cx="94" cy="11" r="5.5"/><path d="M90 15 A5.5 5.5 0 0 0 98 7 Z" fill="#dcdcdc" stroke="none"/>
  <path d="M101 19 h4 l-2 2.5 z" fill="#dcdcdc" stroke="none"/>
  <path d="M115 6 h5 l1 1.5 h7 v9 h-13 z" fill="#c8c8c8" stroke="none"/>
  <path d="M143 6 h10 v7 l-3.5 3.5 h-6.5 z M153 13 h-3.5 v3.5" stroke-width="1.2"/>
  <path d="M170 7 h10 M173 7 v-1.5 h4 v1.5 M171 7.5 v9.5 h8 v-9.5 M173.5 9.5 v5.5 M176.5 9.5 v5.5" stroke-width="1.2"/>
</svg>
<!-- red box -->
<div class="abs" style="left:554px;top:228px;width:253px;height:60px;border:7.5px solid #ee3a38"></div>
</body>
</html>
